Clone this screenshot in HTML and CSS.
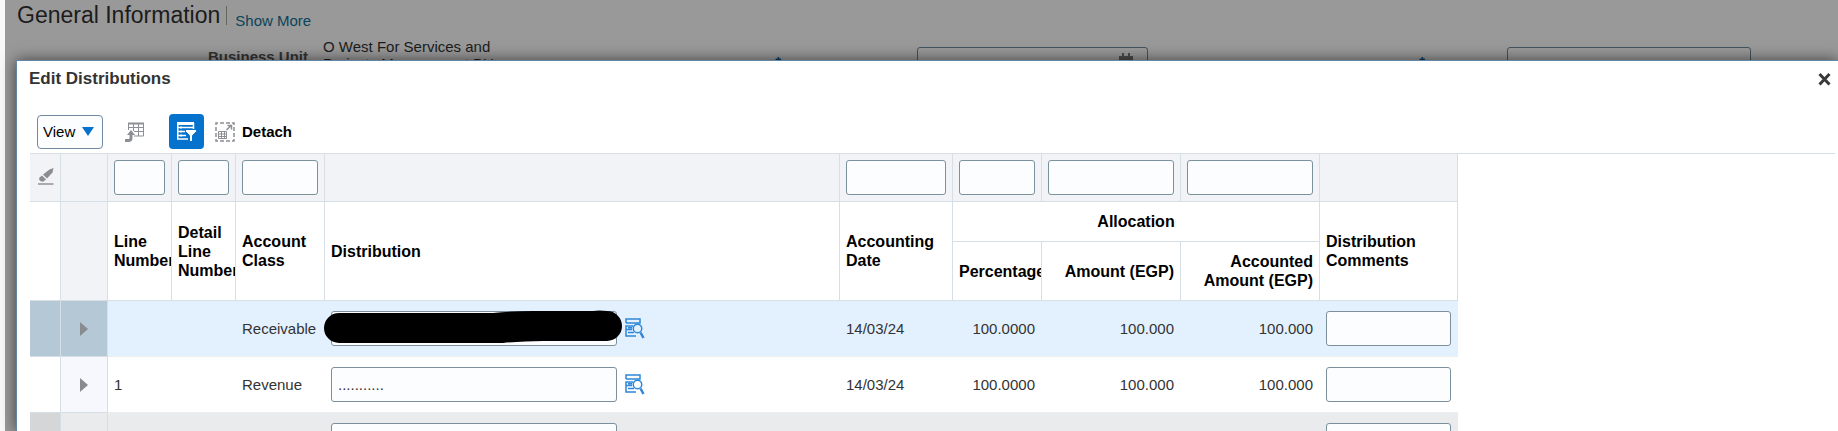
FILE: index.html
```
<!DOCTYPE html>
<html lang="en">
<head>
    <meta charset="UTF-8">
    <meta name="viewport" content="width=device-width, initial-scale=1.0">
    <title>Edit Distributions</title>
    <link rel="stylesheet" href="styles.css">
</head>
<body>
    <main class="page">
        <div class="page-header">
            <h1>General Information</h1>
            <a class="show-more" href="#">Show More</a>
        </div>
        <div class="form">
            <span class="form-label">Business Unit</span>
            <span class="form-value">O West For Services and Projects Management BU</span>
            <label class="required" for="date-field">*</label>
            <div class="date-box">
                <input class="form-input" id="date-field" type="text">
                <svg class="calendar" width="14" height="16" viewBox="0 0 14 16">
                    <path d="M3 0h2v3H3zM9 0h2v3H9z M0 3h14v13H0z" fill="#4c4c4c"/>
                    <path d="M2 7h10v7H2z" fill="#999"/>
                </svg>
            </div>
            <label class="required" for="other-field">*</label>
            <input class="form-input" id="other-field" type="text">
        </div>
    </main>

    <div class="dialog" role="dialog" aria-labelledby="dialog-title">
        <div class="dialog-header">
            <h2 id="dialog-title">Edit Distributions</h2>
            <button class="close" aria-label="Close">
                <svg width="13" height="14" viewBox="0 0 13 14"><path d="M1.500 2l10 10.500M11.500 2l-10 10.500" stroke="#3a3a3a" stroke-width="3"/></svg>
            </button>
        </div>

        <div class="toolbar">
            <button class="view-button">View
                <svg width="12" height="9" viewBox="0 0 12 9"><path d="M0 0h12L6 9z" fill="#0572ce"/></svg>
            </button>
            <button class="icon-button" aria-label="Freeze">
                <svg width="20" height="20" viewBox="0 0 20 20" fill="none" stroke="#8c8f93">
                    <path d="M3.500 8V1.500h15v12.500H9M3 5.500h15.500M9 9.500h9.500M8.500 2v7M13.500 2v12"/>
                    <path d="M3 1.500h16" stroke-width="2"/>
                    <path d="M0 18.500h3.500q2.500 0 2.500-2.500v-4" stroke-width="3"/>
                    <path d="M2 13l4-5 4 5z" fill="#8c8f93" stroke="none"/>
                </svg>
            </button>
            <button class="icon-button filter-button" aria-label="Query By Example">
                <svg width="21" height="20" viewBox="0 0 21 20" fill="none" stroke="#fff">
                    <path d="M1 1.500h17" stroke-width="3"/>
                    <path d="M17.500 1v6M1 5.500h16M1 9.500h8M1 13.500h9M1 17h11" stroke-width="1.500"/>
                    <path d="M1.750 1v16M5 4.500v2M5 8.500v2M5 12.500v2"  stroke-width="1.500"/>
                    <path d="M9.500 7.500h11v2l-4 4v6h-3v-6l-4-4z" fill="#fff" stroke="#0572ce" stroke-width="1"/>
                </svg>
            </button>
            <button class="detach-button">
                <svg width="20" height="20" viewBox="0 0 20 20" fill="none" stroke="#8c8f93">
                    <path d="M1 1h18v18H1z" stroke-width="1.500" stroke-dasharray="4 2" stroke-dashoffset="2"/>
                    <path d="M3.500 9.500h8v7h-8zM3 12h9M3 14.500h9M6.500 9v8M9.500 9v8"/>
                    <path d="M11.500 8L16 3.500M12.500 3.500H16.500V7.500" stroke-width="1.500"/>
                </svg>
                Detach
            </button>
        </div>

        <div class="table-box">
            <table class="grid">
                <colgroup>
                    <col class="col-mark"><col class="col-expand"><col class="col-line"><col class="col-detail"><col class="col-class"><col class="col-dist">
                    <col class="col-date"><col class="col-percent"><col class="col-amount"><col class="col-amount"><col class="col-comment">
                </colgroup>
                <thead>
                    <tr class="filters">
                        <td class="clear">
                            <button class="clear-button" aria-label="Clear All">
                                <svg width="16" height="17" viewBox="0 0 16 17" fill="#8a8d91">
                                    <path d="M5 6.500L11.500 1.500 15.500 0 14.500 4.500 9 10.500z"/>
                                    <path d="M4 7.500l4 4-2.500 2H3L1 11.500 1.500 9.500z"/>
                                    <path d="M0 15h15.500v2H0z" fill="#a8abaf"/>
                                </svg>
                            </button>
                        </td>
                        <td></td>
                        <td><input type="text" aria-label="Filter Line Number"></td>
                        <td><input type="text" aria-label="Filter Detail Line Number"></td>
                        <td><input type="text" aria-label="Filter Account Class"></td>
                        <td></td>
                        <td><input type="text" aria-label="Filter Accounting Date"></td>
                        <td><input type="text" aria-label="Filter Percentage"></td>
                        <td><input type="text" aria-label="Filter Amount"></td>
                        <td><input type="text" aria-label="Filter Accounted Amount"></td>
                        <td></td>
                    </tr>
                    <tr class="group-row">
                        <td rowspan="2"></td>
                        <td rowspan="2" class="expand-head"></td>
                        <th rowspan="2">Line Number</th>
                        <th rowspan="2">Detail Line Number</th>
                        <th rowspan="2">Account Class</th>
                        <th rowspan="2">Distribution</th>
                        <th rowspan="2">Accounting Date</th>
                        <th colspan="3" class="group">Allocation</th>
                        <th rowspan="2">Distribution Comments</th>
                    </tr>
                    <tr class="head-row">
                        <th class="num">Percentage</th>
                        <th class="num">Amount (EGP)</th>
                        <th class="num">Accounted Amount (EGP)</th>
                    </tr>
                </thead>
                <tbody>
                    <tr class="selected">
                        <td class="mark"></td>
                        <td class="expand"><button class="expand-button" aria-label="Expand"></button></td>
                        <td></td>
                        <td></td>
                        <td>Receivable</td>
                        <td>
                            <div class="dist">
                                <input type="text" aria-label="Distribution">
                                <button class="search" aria-label="Select distribution"><svg width="20" height="21"><use href="#search-icon"/></svg></button>
                                <svg class="redacted" width="300" height="34" viewBox="0 0 300 34">
                                    <path d="M16 3H170Q190 1 210 1H270Q276 0 284 1A15 15 0 0 1 284 31H220Q200 31 180 33H16A15 15 0 0 1 16 3z"/>
                                </svg>
                            </div>
                        </td>
                        <td>14/03/24</td>
                        <td class="num">100.0000</td>
                        <td class="num">100.000</td>
                        <td class="num">100.000</td>
                        <td><input type="text" aria-label="Distribution Comments"></td>
                    </tr>
                    <tr>
                        <td class="mark"></td>
                        <td class="expand"><button class="expand-button" aria-label="Expand"></button></td>
                        <td>1</td>
                        <td></td>
                        <td>Revenue</td>
                        <td>
                            <div class="dist">
                                <input type="text" aria-label="Distribution" value="...........">
                                <button class="search" aria-label="Select distribution"><svg width="20" height="21"><use href="#search-icon"/></svg></button>
                            </div>
                        </td>
                        <td>14/03/24</td>
                        <td class="num">100.0000</td>
                        <td class="num">100.000</td>
                        <td class="num">100.000</td>
                        <td><input type="text" aria-label="Distribution Comments"></td>
                    </tr>
                    <tr class="total">
                        <td class="mark"></td>
                        <td class="expand"></td>
                        <td></td>
                        <td></td>
                        <td></td>
                        <td><div class="dist"><input type="text" aria-label="Distribution"></div></td>
                        <td></td>
                        <td></td>
                        <td></td>
                        <td></td>
                        <td><input type="text" aria-label="Distribution Comments"></td>
                    </tr>
                </tbody>
            </table>
        </div>
    </div>

    <!-- shared by every distribution row -->
    <svg class="symbols" width="0" height="0">
        <symbol id="search-icon" viewBox="0 0 20 21">
            <g fill="none" stroke="#2f86d6" stroke-width="1.500">
                <path d="M1 5V1h14v4H1M8 8H1v3.500h6M1 11.500V18h10M3 9.750h4M3 14.500h6"/>
                <circle cx="12.500" cy="10.500" r="4.250"/>
                <path d="M15.500 14.500l3 5.500" stroke-width="2.500"/>
            </g>
        </symbol>
    </svg>
</body>
</html>
```
FILE: styles.css
```
* {
    box-sizing: border-box;
}
body {
    margin: 0;
    background-color: #f8f8f8;
    font-family: "Liberation Sans", Arial, sans-serif;
    font-size: 15px;
    color: #333;
    overflow: hidden;
}
h1, h2 {
    margin: 0;
}
button {
    font: inherit;
    margin: 0;
    padding: 0;
    border: none;
    background: none;
}
svg {
    display: block;
}
input {
    display: block;
    width: 100%;
    height: 35px;
    padding: 0 6px;
    border: 1px solid #7d8f9b;
    border-radius: 3px;
    background-color: #fcfdff;
    font: inherit;
    color: #333;
}

/* page behind the dialog */
.page {
    margin-left: 5px;
    min-height: 100vh;
    background-color: #999;
}
.page-header {
    display: flex;
    align-items: flex-start;
    gap: 6px;
    padding: 2px 12px 0;
}
.page-header h1 {
    font-size: 23px;
    line-height: 26px;
    font-weight: normal;
    color: #1c1c1c;
}
.show-more {
    margin-top: 4px;
    padding: 6px 0 0 8px;
    border-left: 1px solid #66665c;
    line-height: 17px;
    height: 19px;
    color: #0a445a;
    text-decoration: none;
}
.form {
    display: grid;
    grid-template-columns: 303px 190px 419px 231px 359px 244px;
    align-items: start;
    padding-top: 10px;
}
.form-label {
    padding-top: 10px;
    font-weight: bold;
    line-height: 18px;
    text-align: right;
    color: #333;
}
.form-value {
    padding-left: 15px;
    line-height: 17px;
    color: #1c1c1c;
}
.required {
    padding: 15px 136px 0 0;
    text-align: right;
    font-weight: bold;
    color: #06395c;
}
.required ~ .required {
    padding-right: 82px;
}
.form .form-input {
    margin-top: 9px;
    border-color: #44545f;
    background: none;
}
.date-box {
    position: relative;
}
.calendar {
    position: absolute;
    right: 15px;
    top: 15px;
}

/* dialog */
.dialog {
    position: absolute;
    inset: 60px 0 0 16px;
    overflow: hidden;
    border: 1px solid #6687a4;
    border-width: 1px 0 0 1px;
    background-color: #fff;
    box-shadow: 0 0 14px rgba(0, 0, 0, 0.6);
}
.dialog-header {
    display: flex;
    justify-content: space-between;
    align-items: center;
    height: 36px;
    padding: 0 7px 0 12px;
}
.dialog-header h2 {
    font-size: 17px;
    color: #333;
}
.toolbar {
    display: flex;
    align-items: center;
    height: 35px;
    margin: 17px 0 4px 20px;
    color: #000;
}
.view-button {
    display: flex;
    align-items: center;
    gap: 7px;
    width: 66px;
    height: 34px;
    padding-left: 5px;
    border: 1px solid #7189a0;
    border-radius: 4px;
    background-color: #fcfdff;
}
.icon-button {
    display: flex;
    align-items: center;
    justify-content: center;
    width: 35px;
    height: 35px;
    margin-left: 14px;
    border-radius: 4px;
}
.filter-button {
    margin: 0 11px 0 17px;
    background-color: #0572ce;
}
.detach-button {
    display: flex;
    align-items: center;
    gap: 7px;
    font-weight: bold;
}

/* distributions table */
.table-box {
    margin: 0 3px 0 13px;
    border-top: 1px solid #d6dfe6;
}
.grid {
    table-layout: fixed;
    width: 1428px;
    border-spacing: 0;
}
.col-mark { width: 31px; }
.col-expand { width: 47px; }
.col-line, .col-detail { width: 64px; }
.col-class, .col-percent { width: 89px; }
.col-dist { width: 515px; }
.col-date { width: 113px; }
.col-amount { width: 139px; }
.col-comment { width: 138px; }
.grid th, .grid td {
    padding: 0 7px 0 6px;
    text-align: left;
    overflow: hidden;
}
.grid thead th, .grid thead td {
    padding-right: 6px;
    border-right: 1px solid #d6dfe6;
    border-bottom: 1px solid #d6dfe6;
}
.grid th {
    font-size: 16px;
    line-height: 19px;
    color: #000;
}
.grid .num {
    text-align: right;
}
.grid .group {
    text-align: center;
}
.filters td {
    height: 48px;
    background-color: #f2f3f7;
}
.filters input {
    border-color: #7a929c;
}
.grid .clear {
    padding: 0 0 0 8px;
}
.group-row {
    height: 40px;
}
.head-row {
    height: 59px;
}
.grid .expand-head {
    background-color: #f2f3f7;
}
.grid tbody td {
    height: 56px;
    border-bottom: 1px solid #eceef0;
}
.grid tbody .mark, .grid tbody .expand {
    border-right: 1px solid #d6dfe6;
    border-bottom-color: #d6dfe6;
}
.grid .expand {
    padding-left: 19px;
    background-color: #f6f8fd;
}
.expand-button {
    display: block;
    border-left: 8px solid #888b8f;
    border-top: 7px solid transparent;
    border-bottom: 7px solid transparent;
}
.grid .selected td {
    background-color: #e3f1ff;
}
.grid .selected .mark, .grid .selected .expand {
    background-color: #b5c8d6;
}
.grid .total td {
    background-color: #eaebed;
}
.grid .total .mark {
    background-color: #d5d6d7;
}
.dist {
    position: relative;
    display: flex;
    align-items: center;
    gap: 8px;
}
.dist input {
    width: 286px;
}
.grid td:has(.dist) {
    overflow: visible;
}
.redacted {
    position: absolute;
    left: -8px;
    top: -1px;
}
.symbols {
    position: absolute;
}
```
